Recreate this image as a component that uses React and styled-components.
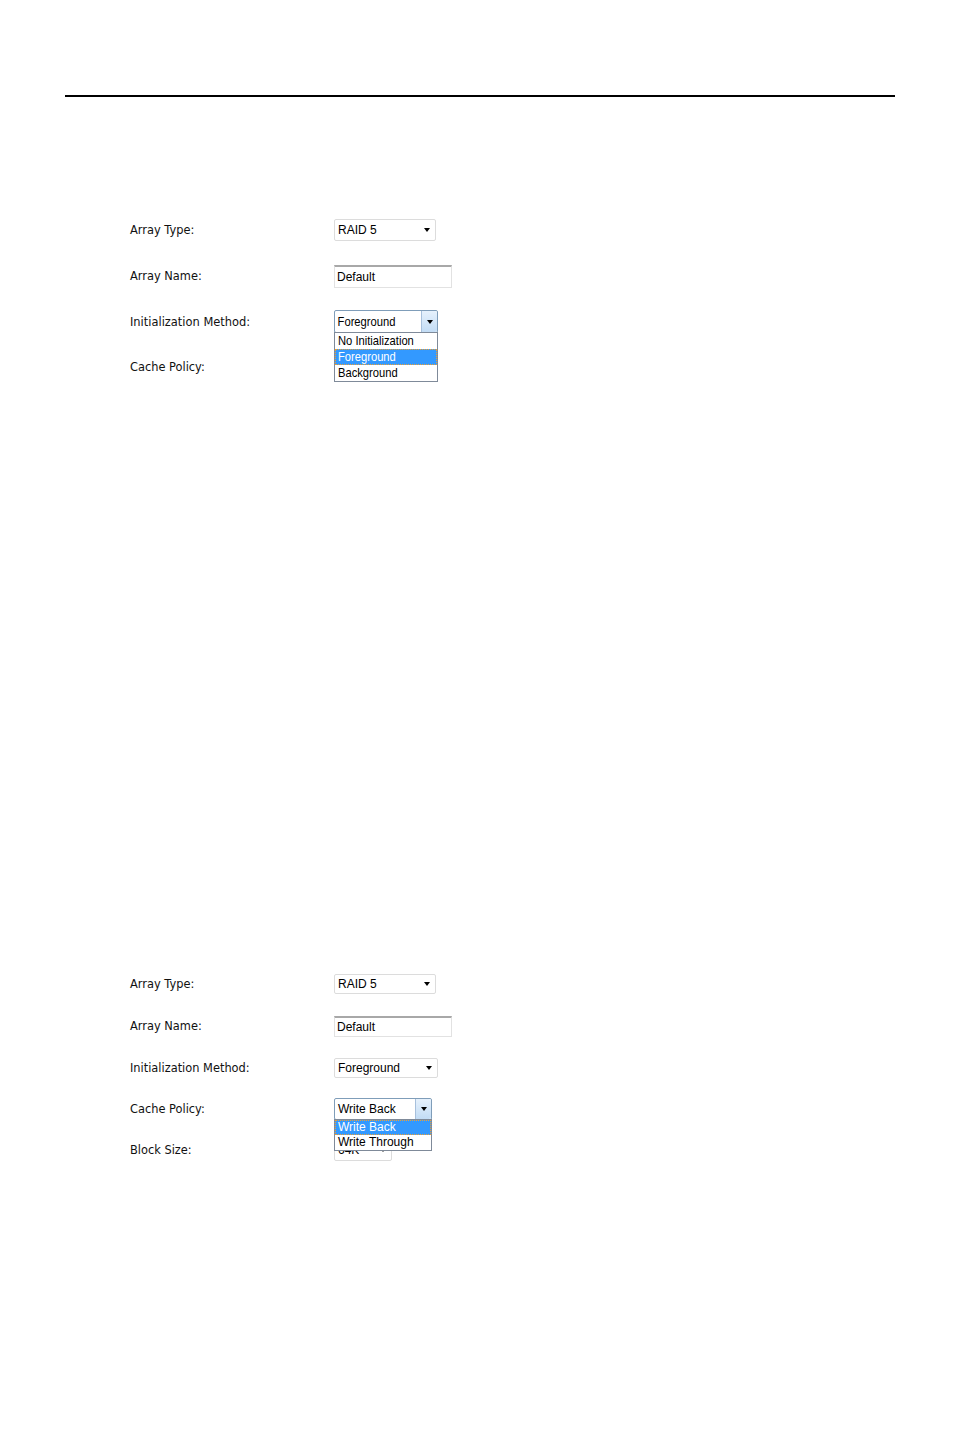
import React from "react";
import styled, { createGlobalStyle, css } from "styled-components";

const Global = createGlobalStyle`
  html, body { margin: 0; padding: 0; background: #fff; }
  body { font-family: "DejaVu Sans", Verdana, sans-serif; }
`;

const Page = styled.div`
  width: 954px;
  min-height: 1432px;
  padding-top: 95px;
  box-sizing: border-box;
`;

const Rule = styled.hr`
  margin: 0 59px 0 65px;
  border: none;
  height: 2px;
  background: #000;
`;

const Panel = styled.section`
  margin-top: ${(p) => p.top}px;
  padding-left: 130px;
`;

const Row = styled.div`
  display: grid;
  grid-template-columns: 204px auto;
  align-items: center;
  height: ${(p) => p.h}px;
  position: relative;
  z-index: ${(p) => (p.front ? 2 : 1)};
`;

const Label = styled.span`
  font-family: "DejaVu Sans", Verdana, sans-serif;
  font-size: 11.4px;
  color: #111;
  white-space: nowrap;
  ${(p) =>
    p.tall &&
    css`
      font-size: 13px;
      display: inline-block;
      transform: scaleX(0.88);
      transform-origin: left center;
    `}
`;

const Field = styled.div`
  position: relative;
  width: ${(p) => p.w}px;
  height: ${(p) => p.h || 21}px;
  box-sizing: border-box;
  display: flex;
  align-items: center;
  background: #fff;
  border: 1px solid ${(p) => (p.open ? "#7f9db9" : "#dcdcdc")};
  border-radius: 2px;
  font-family: "Liberation Sans", Arial, sans-serif;
  font-size: 12px;
  color: #000;
`;

const TextBox = styled(Field)`
  border-color: #e2e2e2;
  border-top: 2px solid #a8a8a8;
  border-radius: 0;
`;

const Value = styled.span`
  flex: 1;
  padding-left: ${(p) => (p.pad != null ? p.pad : 3)}px;
  white-space: nowrap;
  overflow: hidden;
  ${(p) =>
    p.condensed &&
    css`
      font-size: 13px;
      transform: scaleX(0.86);
      transform-origin: left center;
    `}
`;

const Caret = styled.span`
  width: 0;
  height: 0;
  margin-right: 5px;
  border-left: 3.5px solid transparent;
  border-right: 3.5px solid transparent;
  border-top: 4px solid #000;
`;

const ArrowButton = styled.span`
  width: 15px;
  align-self: stretch;
  display: flex;
  align-items: center;
  justify-content: center;
  background: linear-gradient(#e6f1fc, #c2dcf5);
  border-left: 1px solid #a7c0dc;
  border-radius: 0 2px 2px 0;

  ${Caret} {
    margin: 0;
  }
`;

const List = styled.ul`
  position: absolute;
  top: 100%;
  left: -1px;
  right: -1px;
  margin: 0;
  padding: 0;
  list-style: none;
  background: #fff;
  border: 1px solid #7f8a99;
  z-index: 5;
`;

const Item = styled.li`
  height: ${(p) => p.h}px;
  line-height: ${(p) => p.h - 2}px;
  box-sizing: border-box;
  padding-left: 2px;
  white-space: nowrap;
  color: ${(p) => (p.active ? "#fff" : "#000")};
  background: ${(p) => (p.active ? "#3399ff" : "#fff")};
  border: 1px ${(p) => (p.active ? "dotted #f0a030" : "solid transparent")};
  ${(p) =>
    p.condensed &&
    css`
      font-size: 13px;
      span {
        display: inline-block;
        transform: scaleX(0.86);
        transform-origin: left center;
      }
    `}
`;

const Select = ({ w, value, open, options = [], condensed, h, itemH = 16 }) => (
  <Field w={w} open={open} h={h}>
    <Value condensed={condensed}>{value}</Value>
    {open ? (
      <ArrowButton>
        <Caret />
      </ArrowButton>
    ) : (
      <Caret />
    )}
    {open && (
      <List>
        {options.map((o) => (
          <Item key={o} h={itemH} active={o === value} condensed={condensed}>
            <span>{o}</span>
          </Item>
        ))}
      </List>
    )}
  </Field>
);

const Input = ({ w, value, h }) => (
  <TextBox w={w} h={h}>
    <Value pad={2}>{value}</Value>
  </TextBox>
);

export default function App() {
  return (
    <Page>
      <Global />
      <Rule />

      <Panel top={110}>
        <Row h={46}>
          <Label>Array Type:</Label>
          <Select w={102} h={22} value="RAID 5" />
        </Row>
        <Row h={46}>
          <Label>Array Name:</Label>
          <Input w={118} h={23} value="Default" />
        </Row>
        <Row h={45} front>
          <Label tall>Initialization Method:</Label>
          <Select
            w={104}
            h={23}
            value="Foreground"
            open
            condensed
            options={["No Initialization", "Foreground", "Background"]}
          />
        </Row>
        <Row h={45}>
          <Label>Cache Policy:</Label>
          <span />
        </Row>
      </Panel>

      <Panel top={574}>
        <Row h={42}>
          <Label>Array Type:</Label>
          <Select w={102} h={20} value="RAID 5" />
        </Row>
        <Row h={42}>
          <Label>Array Name:</Label>
          <Input w={118} h={21} value="Default" />
        </Row>
        <Row h={42}>
          <Label>Initialization Method:</Label>
          <Select w={104} h={20} value="Foreground" />
        </Row>
        <Row h={40} front>
          <Label>Cache Policy:</Label>
          <Select
            w={98}
            h={22}
            value="Write Back"
            open
            itemH={15}
            options={["Write Back", "Write Through"]}
          />
        </Row>
        <Row h={42}>
          <Label>Block Size:</Label>
          <Select w={58} h={21} value="64K" />
        </Row>
      </Panel>
    </Page>
  );
}
